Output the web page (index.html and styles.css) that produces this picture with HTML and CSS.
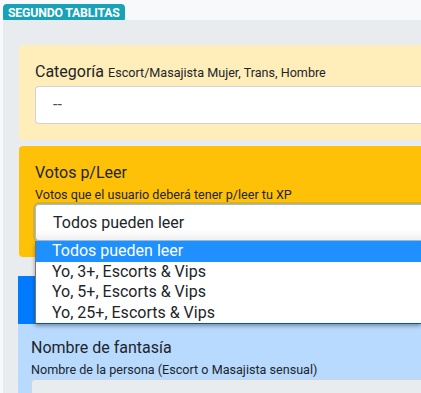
FILE: index.html
```html
<!DOCTYPE html>
<html>
  <head>
    <title>Segundo Tablitas</title>
    <link rel="stylesheet" href="styles.css">
  </head>
  <body>
    <div class="top-bar">
      <span class="badge">SEGUNDO TABLITAS</span>
    </div>

    <div class="panel">
      <div class="box box-light">
        <label class="field-label">Categoría <small>Escort/Masajista Mujer, Trans, Hombre</small></label>
        <div class="field">--</div>
      </div>

      <div class="box box-warning">
        <label class="field-label">Votos p/Leer</label>
        <div class="field-help">Votos que el usuario deberá tener p/leer tu XP</div>
        <div class="select-wrap">
          <div class="field field-select">Todos pueden leer</div>
          <div class="select-list">
            <div class="select-option selected">Todos pueden leer</div>
            <div class="select-option">Yo, 3+, Escorts &amp; Vips</div>
            <div class="select-option">Yo, 5+, Escorts &amp; Vips</div>
            <div class="select-option">Yo, 25+, Escorts &amp; Vips</div>
          </div>
        </div>
      </div>

      <div class="box-header"></div>
      <div class="box box-info">
        <label class="field-label">Nombre de fantasía</label>
        <div class="field-help">Nombre de la persona (Escort o Masajista sensual)</div>
        <div class="field field-disabled"></div>
      </div>
    </div>
  </body>
</html>
```

FILE: styles.css
```css
* {
  box-sizing: border-box;
  margin: 0;
  padding: 0;
}

html,
body {
  height: 100%;
}

body {
  font-family: Roboto, "Liberation Sans", Arial, sans-serif;
  background-color: #f8f9fa;
  color: #212529;
  overflow: hidden;
  display: flex;
  flex-direction: column;
}

/* Etiqueta superior */
.top-bar {
  height: 20px;
  flex-shrink: 0;
  padding: 2px 0 0 3px;
}

.badge {
  display: inline-block;
  height: 18px;
  padding: 0 5px;
  border-radius: 4px;
  background-color: #17a2b8;
  color: #fff;
  font-size: 12.3px;
  font-weight: bold;
  line-height: 18px;
  letter-spacing: -0.2px;
}

.panel {
  flex: 1;
  min-height: 0;
  overflow: hidden;
  margin-left: 3px;
  padding: 25px 0 0 16px;
  background-color: #e9ecef;
}

/* Cajas de color */
.box {
  padding: 15px 0 16px 16px;
  border-radius: 4px 0 0 4px;
}

.box + .box {
  margin-top: 6px;
}

.box-light {
  background-color: #ffeeba;
}

.box-warning {
  background-color: #ffc107;
}

.box-header {
  margin-top: 19px;
  margin-left: -1px;
  height: 48px;
  background-color: #007bff;
}

.box-info {
  margin-left: -1px;
  padding: 12px 0 0 13px;
  border-radius: 0;
  background-color: #b8daff;
}

.field-label {
  display: block;
  font-size: 16px;
  line-height: 24px;
  margin-bottom: 1px;
}

.field-label small {
  font-size: 12.6px;
}

.field-help {
  font-size: 12.6px;
  line-height: 19px;
  margin-top: -1px;
}

.field {
  height: 38px;
  padding: 0 17px;
  border: 1px solid #ced4da;
  border-right: none;
  border-radius: 4px 0 0 4px;
  background-color: #fff;
  color: #495057;
  font-size: 16px;
  line-height: 36px;
}

.field-disabled {
  background-color: #e9ecef;
}

/* Select abierto */
.select-wrap {
  position: relative;
}

.field-select {
  height: 37px;
  border-color: #9cbfd6;
  color: #212529;
  background: linear-gradient(#fff 70%, #f1f1f1);
  box-shadow: 0 0 0 2px rgba(120, 150, 140, 0.35);
}

.select-list {
  position: absolute;
  top: 37px;
  left: 0;
  right: 0;
  z-index: 2;
  border-left: 1px solid #767676;
  background-color: #fff;
  box-shadow: 0 3px 4px rgba(0, 0, 0, 0.35);
}

.select-option {
  height: 20.5px;
  padding-left: 16px;
  font-size: 16px;
  line-height: 20px;
  color: #212529;
}

.select-option.selected {
  background-color: #1e90ff;
  color: #fff;
}
```
